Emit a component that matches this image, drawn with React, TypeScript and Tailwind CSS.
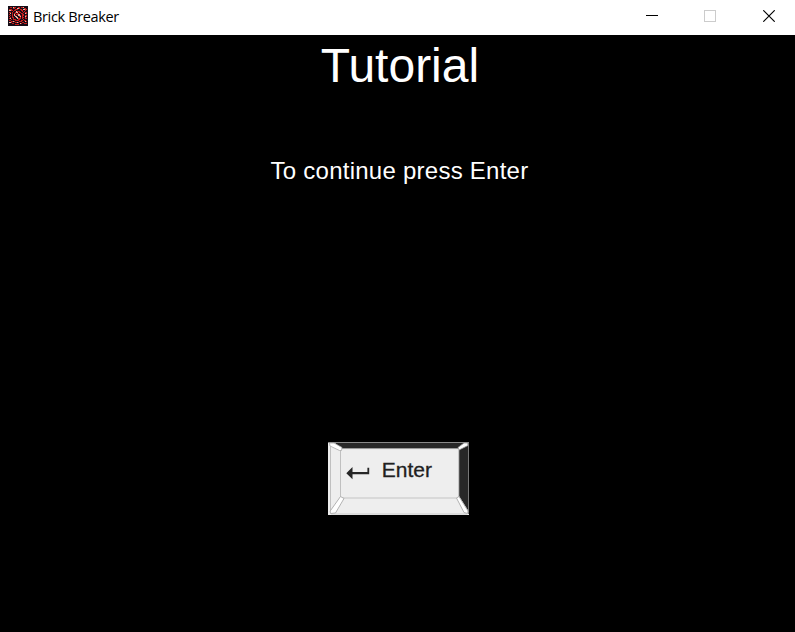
import React from "react";

const brickPixels = [
  "kkkkkkkkkkkkkkkkkkkk",
  "kkrrkwrrkkrrkrrwkkkk",
  "kkkkkrrkkwwrkkkkrrkk",
  "krrrkkkrrrkkrrkwwrrk",
  "kwwrrkrrkkkkkrrkkrkk",
  "kkkkkrkkwrrrkkrkrkkk",
  "krrkrkkrwwkrrkkrkrrk",
  "kkwkrkrrkrrkkrrkkwrk",
  "krkkrkwkrrwwkkrrkkkk",
  "kkrkrkwrkkwwrkrrkrrk",
  "krkkrkkwwkkrwkrkkwrk",
  "kkrkrrkkwwkkrkrrkrkk",
  "krwkkrkkkwrrrkrkkrrk",
  "kkkrkrrrkkrrkkkrkkkk",
  "krrkkkkrrrrkkrrkrrkk",
  "kkkrrwrkkkkrrrkkkwrk",
  "kwwrkkkrrwrkkkrrkkkk",
  "kkkkrrkkkkkkwrkkrrrk",
  "kkkkkkkrrrrkkkkkkkkk",
  "kkkkkkkkkkkkkkkkkkkk",
];

const brickColors: Record<string, string> = { k: "#160d17", r: "#c81d1d", w: "#e9b3a2" };

function AppIcon() {
  return (
    <svg className="size-5 shrink-0" viewBox="0 0 20 20" shapeRendering="crispEdges">
      {brickPixels.flatMap((row, y) =>
        row.split("").map((c, x) => (
          <rect key={`${x}-${y}`} x={x} y={y} width="1" height="1" fill={brickColors[c]} />
        )),
      )}
    </svg>
  );
}

function TitleBar() {
  return (
    <header className="flex h-[35px] items-start bg-white text-black">
      <div className="flex grow items-start gap-[5px] pt-1.5 pl-2">
        <AppIcon />
        <span className="pt-px font-['Open_Sans','Noto_Sans',sans-serif] text-[14.5px] leading-5 tracking-[-0.35px] whitespace-nowrap">
          Brick Breaker
        </span>
      </div>
      <div className="flex pt-2.5 pr-[20px]">
        <svg className="mr-[46px] h-3 w-3" viewBox="0 0 12 12" shapeRendering="crispEdges">
          <path d="M0 5.5H12" stroke="#000" />
        </svg>
        <svg className="mr-[47px] h-3 w-3" viewBox="0 0 12 12" shapeRendering="crispEdges">
          <rect x="0.5" y="0.5" width="11" height="11" fill="none" stroke="#ccc" />
        </svg>
        <svg className="h-3 w-3" viewBox="0 0 12 12">
          <path d="M0.3 0.3L11.7 11.7M11.7 0.3L0.3 11.7" stroke="#000" strokeWidth="1.15" />
        </svg>
      </div>
    </header>
  );
}

function EnterKey() {
  return (
    <svg className="h-[73px] w-[141px]" viewBox="0 0 141 73">
      <rect width="141" height="73" fill="#eeeeee" />
      <path d="M7 1H137L131 6.5H13Z" fill="#272727" />
      <path d="M131 7L141 2V70L131 54Z" fill="#272727" />
      <path d="M0 0.5H141" stroke="#8a8a8a" />
      <path d="M140.5 1V72" stroke="#777" />
      <path d="M2.5 4V70M12.5 8V55" fill="none" stroke="#c0c0c0" />
      <path d="M13 56H131" stroke="#c4c4c4" />
      <path d="M3 72H139" stroke="#cccccc" />
      <path d="M130.8 8V55" stroke="#b5b5b5" />
      <path d="M14 6.6H130" stroke="#a0a0a0" strokeWidth="0.8" />
      <path d="M1.5 1H6L14 5.5L13.5 8.5L11.5 8.5L2 4Z" fill="#fff" stroke="#aaa" strokeWidth="0.8" />
      <path d="M139.5 1H136L130 5.5L131 8L140 3.5Z" fill="#fff" stroke="#999" strokeWidth="0.8" />
      <path d="M12.5 54.5L16 56.5L7.5 71L2.5 71.5L2.2 69Z" fill="#fff" stroke="#aaa" strokeWidth="0.9" />
      <path d="M131 54.5L128.5 56L136 70.5L139.5 71.5L140 69Z" fill="#fff" stroke="#aaa" strokeWidth="0.9" />
      <path d="M18.3 31.2L24.5 25V30.1H39.4V25.8H41.2V32.2H24.5V37.2Z" fill="#262626" />
      <text
        x="53.8"
        y="34.7"
        fill="#202020"
        stroke="#202020"
        strokeWidth="0.3"
        fontSize="21"
        textLength="50.2"
        lengthAdjust="spacingAndGlyphs"
        className="font-['Liberation_Sans',Arial,sans-serif]"
      >
        Enter
      </text>
    </svg>
  );
}

export default function App() {
  return (
    <div className="flex h-[632px] w-[795px] flex-col overflow-hidden bg-black font-['Liberation_Sans',Arial,sans-serif] text-white">
      <TitleBar />
      <main className="flex grow flex-col items-center pl-[3px]">
        <h1 className="mt-1 pl-[2px] text-[48px] leading-[54px]">Tutorial</h1>
        <p className="mt-[64px] pl-[1px] text-[24px] leading-7 tracking-[0.25px] whitespace-nowrap">
          To continue press Enter
        </p>
        <div className="mt-[257px] mr-[2px]">
          <EnterKey />
        </div>
      </main>
    </div>
  );
}
